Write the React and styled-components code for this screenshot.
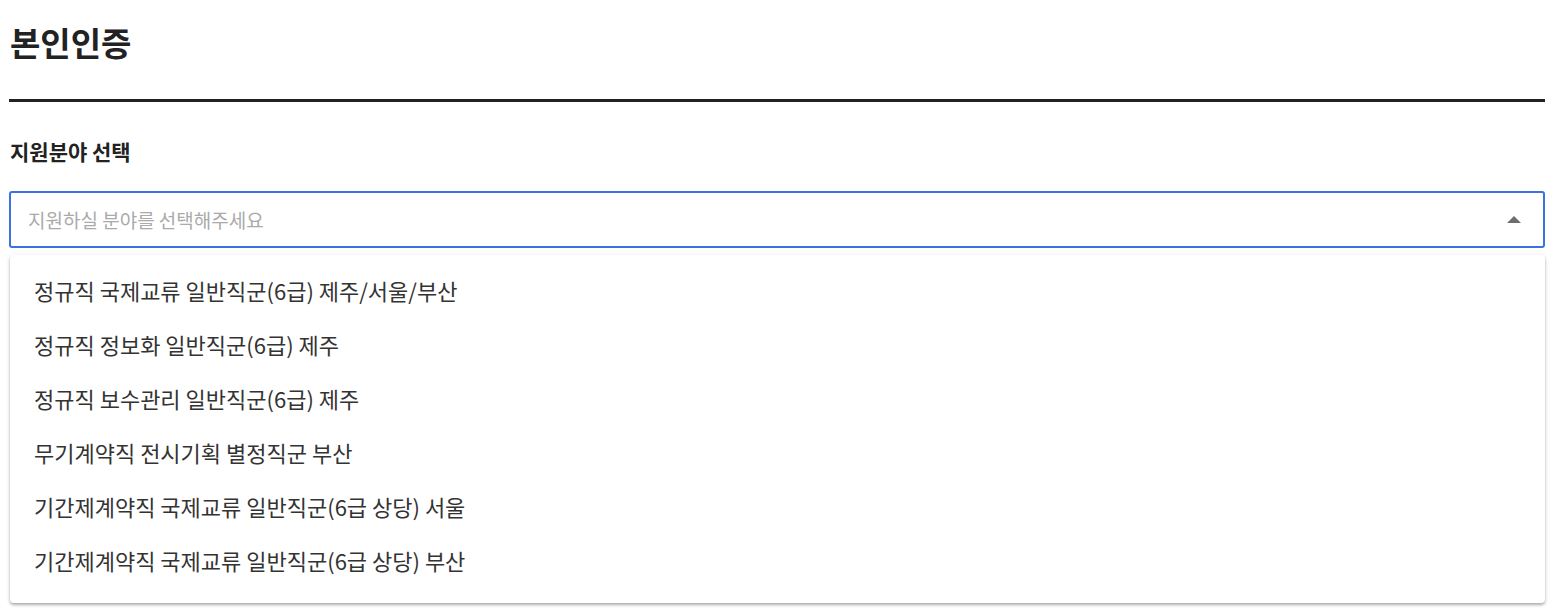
import React from 'react';
import styled, { createGlobalStyle } from 'styled-components';

const GlobalStyle = createGlobalStyle`
    html, body {
        margin: 0;
        padding: 0;
        background: #fff;
        font-family: "Noto Sans CJK KR", "Noto Sans", sans-serif;
        color: #222;
    }
    * { box-sizing: border-box; }
`

const Page = styled.div`
    padding: 0 14px 12px 9px;
`

const Title = styled.h1`
    margin: 0;
    padding: 19px 0 0 1px;
    height: 102px;
    border-bottom: 3px solid #222;
    font-size: 33px;
    font-weight: 700;
    line-height: 46px;
    color: #222;
`

const Label = styled.div`
    margin-top: 35px;
    padding-left: 1px;
    font-size: 21px;
    font-weight: 700;
    line-height: 28px;
    color: #222;
`

const SelectBox = styled.div`
    display: flex;
    align-items: center;
    justify-content: space-between;
    margin-top: 26px;
    height: 57px;
    padding: 0 22px 0 17px;
    border: 2px solid #3a72e0;
    border-radius: 3px;
    font-size: 19px;
    color: #aaa;
`

const Arrow = styled.span`
    width: 0;
    height: 0;
    border-left: 7px solid transparent;
    border-right: 7px solid transparent;
    border-bottom: 7px solid #6e6e6e;
`

const Menu = styled.ul`
    margin: 7px 0 0 1px;
    padding: 8px 0 16px;
    list-style: none;
    background: #fff;
    border-radius: 4px;
    box-shadow: 0 2px 3px rgba(0, 0, 0, 0.3), 0 0 6px rgba(0, 0, 0, 0.06);
`

const MenuItem = styled.li`
    display: flex;
    align-items: center;
    height: 54px;
    padding-left: 24px;
    font-size: 22px;
    color: #333;
`

const OPTIONS = [
    '정규직 국제교류 일반직군(6급) 제주/서울/부산',
    '정규직 정보화 일반직군(6급) 제주',
    '정규직 보수관리 일반직군(6급) 제주',
    '무기계약직 전시기획 별정직군 부산',
    '기간제계약직 국제교류 일반직군(6급 상당) 서울',
    '기간제계약직 국제교류 일반직군(6급 상당) 부산',
];

export default function App() {
    return (
        <Page>
            <GlobalStyle />
            <Title>본인인증</Title>
            <Label>지원분야 선택</Label>
            <SelectBox>
                <span>지원하실 분야를 선택해주세요</span>
                <Arrow />
            </SelectBox>
            <Menu>
                {OPTIONS.map(opt => <MenuItem key={opt}>{opt}</MenuItem>)}
            </Menu>
        </Page>
    );
}
